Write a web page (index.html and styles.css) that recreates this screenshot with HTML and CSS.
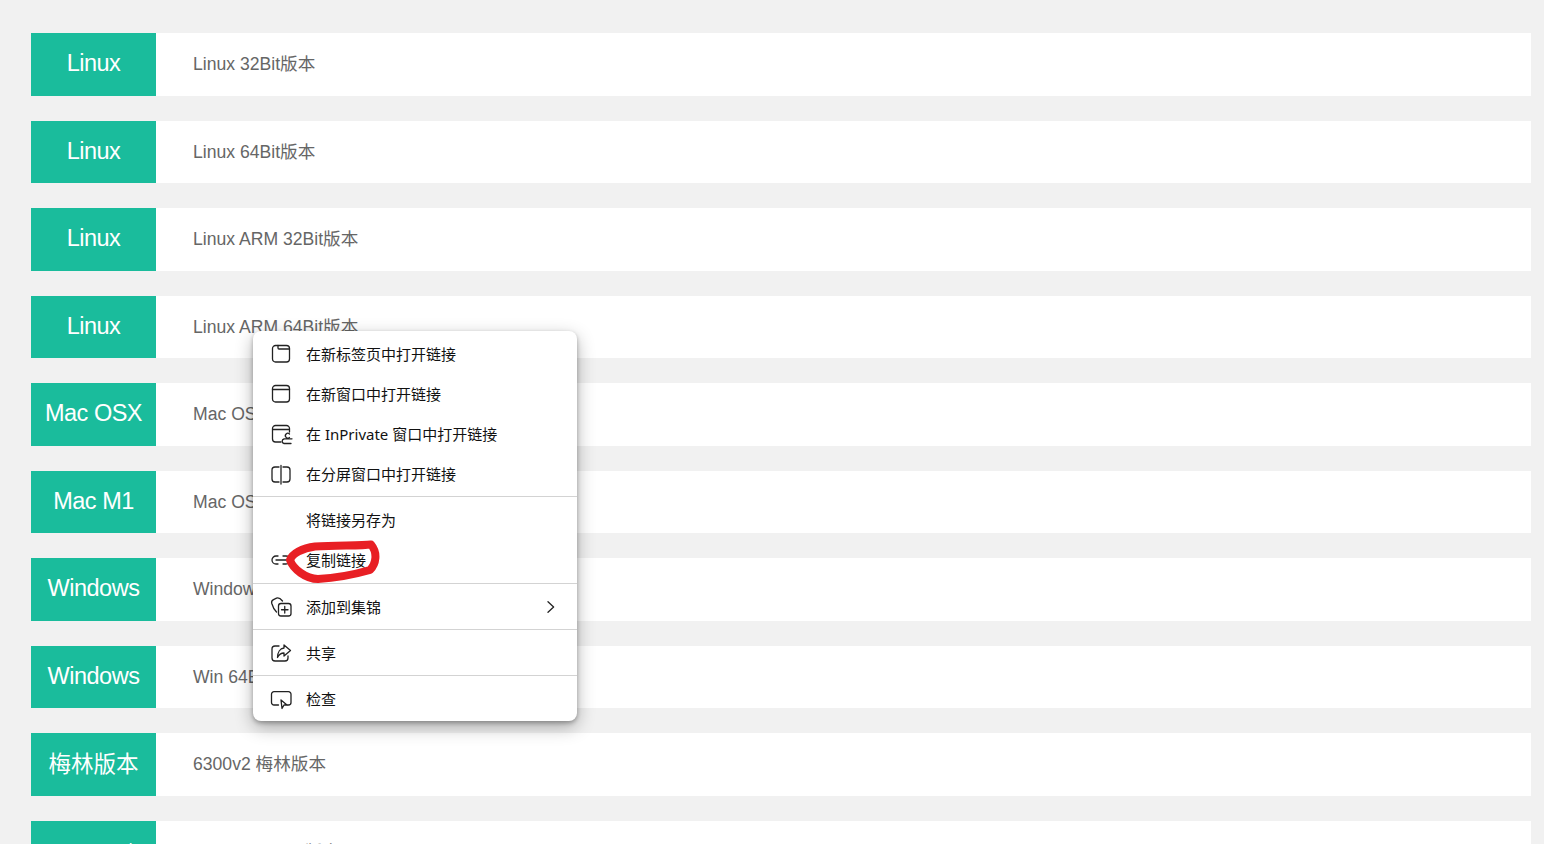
FILE: index.html
```html
<!DOCTYPE html>
<html lang="zh-CN">
<head>
<meta charset="utf-8">
<title>固件下载</title>
<link rel="stylesheet" href="styles.css">
</head>
<body>
<ul class="list">
  <li class="row"><span class="tag">Linux</span><a class="desc">Linux 32Bit版本</a></li>
  <li class="row"><span class="tag">Linux</span><a class="desc">Linux 64Bit版本</a></li>
  <li class="row"><span class="tag">Linux</span><a class="desc">Linux ARM 32Bit版本</a></li>
  <li class="row"><span class="tag">Linux</span><a class="desc">Linux ARM 64Bit版本</a></li>
  <li class="row"><span class="tag">Mac OSX</span><a class="desc">Mac OSX 版本</a></li>
  <li class="row"><span class="tag">Mac M1</span><a class="desc">Mac OSX M1版本</a></li>
  <li class="row"><span class="tag">Windows</span><a class="desc">Windows 32Bit版本</a></li>
  <li class="row"><span class="tag">Windows</span><a class="desc">Win 64Bit版本</a></li>
  <li class="row"><span class="tag tag-cjk">梅林版本</span><a class="desc">6300v2 梅林版本</a></li>
  <li class="row"><span class="tag">openwrt</span><a class="desc">Openwrt 64Bit版本</a></li>
</ul>

<div class="menu">
  <div class="item">
    <svg class="ico" viewBox="0 0 20 20"><rect x="1.5" y="1.5" width="17" height="16.500" rx="3"/><path d="M7 1.500V4a1 1 0 0 0 1 1H18.500"/></svg>
    <span class="label">在新标签页中打开链接</span>
  </div>
  <div class="item">
    <svg class="ico" viewBox="0 0 20 20"><rect x="1.500" y="1.500" width="17" height="16.500" rx="3"/><path d="M1.500 5.500H18.500"/></svg>
    <span class="label">在新窗口中打开链接</span>
  </div>
  <div class="item">
    <svg class="ico" viewBox="0 0 20 20"><path d="M18.500 8V4.500a3 3 0 0 0-3-3h-11a3 3 0 0 0-3 3V15a3 3 0 0 0 3 3H10M1.500 5.500H18.500"/><path d="M18.500 10a2.400 2.400 0 1 0 0 3.400M13 14.800h8M13 15a2.300 2.300 0 0 0 0 4.500h7"/></svg>
    <span class="label">在 InPrivate 窗口中打开链接</span>
  </div>
  <div class="item">
    <svg class="ico" viewBox="0 0 20 20"><path d="M8 3H4a3 3 0 0 0-3 3v9a3 3 0 0 0 3 3h4M12 3h4a3 3 0 0 1 3 3v9a3 3 0 0 1-3 3h-4M10 1.500V20"/></svg>
    <span class="label">在分屏窗口中打开链接</span>
  </div>
  <div class="sep"></div>
  <div class="item"><span class="label noicon">将链接另存为</span></div>
  <div class="item">
    <svg class="ico" viewBox="0 0 20 20"><path d="M7 6H5a4 4 0 0 0 0 8h2M5 10H19M12 6h3a4 4 0 0 1 0 8h-3"/></svg>
    <span class="label">复制链接</span>
  </div>
  <div class="sep sep-wide"></div>
  <div class="item">
    <svg class="ico" viewBox="0 0 20 20"><rect x="7.500" y="6.500" width="12.500" height="12.500" rx="2.500"/><path d="M13.750 9.500v6.500M10.500 12.750H17M5.500 15C3.500 13 1.500 9 .7 6.200.3 4.500 1 3.300 2.500 2.600L5.500 1.200C7 .6 9 1 11.500 4"/></svg>
    <span class="label">添加到集锦</span>
    <svg class="chev" viewBox="0 0 8 12"><path d="M1 .8 6.600 6 1 11.200"/></svg>
  </div>
  <div class="sep"></div>
  <div class="item">
    <svg class="ico" viewBox="0 0 20 20"><path d="M8 3H4a3 3 0 0 0-3 3v9a3 3 0 0 0 3 3h10a3 3 0 0 0 3-3v-2"/><path d="M13 2l6.500 5.500L13 13v-3c-3 0-5 1.500-6.500 4.500C6.500 9.500 9 5.500 13 5z"/></svg>
    <span class="label">共享</span>
  </div>
  <div class="sep"></div>
  <div class="item">
    <svg class="ico" viewBox="0 0 20 20"><path d="M7.500 16H3a2.500 2.500 0 0 1-2.500-2.500V5.200A2.500 2.500 0 0 1 3 2.700h14.500A2.500 2.500 0 0 1 20 5.200v8.300a2.500 2.500 0 0 1-2.500 2.500h-1"/><path d="M10 11l6 5h-3l-2 3.500z"/></svg>
    <span class="label">检查</span>
  </div>
  <svg class="scribble" viewBox="0 0 100 50"><path d="M85 5.500C75 7 50 6 29 7.500 16 9 6 15 4 21c3 9 16 19 28 19 18-1 38-5 52-9 6-6 8-17 1-25.500z"/></svg>
</div>
</body>
</html>
```
FILE: styles.css
```css
html, body {
  margin: 0;
  height: 100%;
  overflow: hidden;
}
body {
  background: #f1f1f1;
  font-family: "Liberation Sans", "Noto Sans CJK SC", sans-serif;
  position: relative;
}
.list {
  list-style: none;
  margin: 0;
  padding: 33px 13px 0 31px;
  display: grid;
  grid-auto-rows: 62.5px;
  row-gap: 25px;
}
.row {
  display: flex;
  align-items: center;
  background: #fff;
}
.tag {
  flex: 0 0 125px;
  align-self: stretch;
  box-sizing: border-box;
  padding-bottom: 1px;
  display: flex;
  align-items: center;
  justify-content: center;
  background: #1abc9c;
  color: #fff;
  font-size: 23.5px;
  letter-spacing: -.5px;
}
.tag-cjk {
  padding-bottom: 4px;
  font-size: 22.5px;
  letter-spacing: 0;
}
.desc {
  margin-left: 37px;
  padding-bottom: 3px;
  color: #666;
  font-size: 17.6px;
}
.menu {
  position: absolute;
  left: 253px;
  top: 331px;
  width: 324px;
  box-sizing: border-box;
  padding: 3px 0 2px;
  background: #fff;
  border-radius: 8px;
  box-shadow: 0 2px 4px rgba(0, 0, 0, .28), 0 6px 18px rgba(0, 0, 0, .3);
  font-family: "Noto Sans", "Noto Sans CJK SC", sans-serif;
  font-size: 15px;
  color: #111;
}
.item {
  height: 40px;
  display: flex;
  align-items: center;
  padding-left: 18px;
}
.label {
  padding-bottom: 2px;
}
.ico {
  width: 20px;
  height: 20px;
  margin-right: 15px;
  flex: none;
  overflow: visible;
  fill: none;
  stroke: #222;
  stroke-width: 1.3;
  stroke-linecap: round;
  stroke-linejoin: round;
}
.noicon {
  margin-left: 35px;
}
.chev {
  width: 8px;
  height: 12px;
  margin-left: auto;
  margin-right: 22px;
  fill: none;
  stroke: #222;
  stroke-width: 1.3;
  stroke-linecap: round;
  stroke-linejoin: round;
}
.sep {
  height: 1px;
  margin: 2px 0 3px;
  background: #d3d3d3;
}
.sep-wide {
  margin-top: 3px;
}
.scribble {
  position: absolute;
  left: 33px;
  top: 208px;
  width: 100px;
  height: 50px;
  fill: none;
  stroke: #e81f24;
  stroke-width: 8;
  stroke-linecap: round;
  stroke-linejoin: round;
}
```
